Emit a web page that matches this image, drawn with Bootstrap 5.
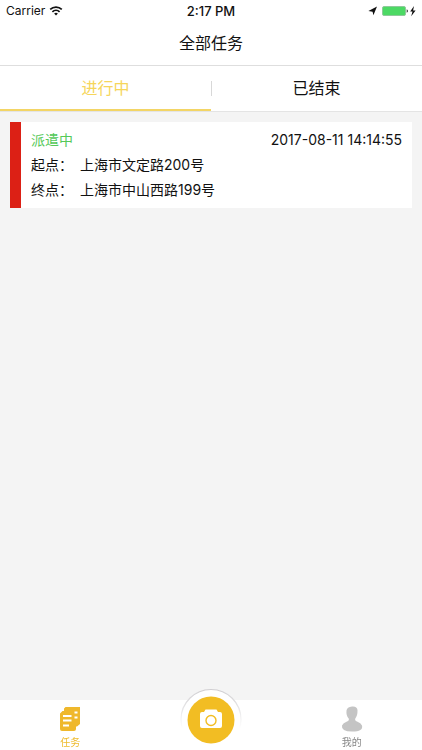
<!DOCTYPE html>
<html lang="zh-CN">
<head>
<meta charset="utf-8">
<meta name="viewport" content="width=device-width, initial-scale=1">
<title>全部任务</title>
<link href="https://cdn.jsdelivr.net/npm/bootstrap@5.3.0/dist/css/bootstrap.min.css" rel="stylesheet">
<style>
body { font-family: Inter, "Noto Sans CJK SC", sans-serif; font-size: 14px; background: #f4f4f4; color: #111; }
.status-bar { height: 22px; font-size: 12px; line-height: 22px; padding: 0 6px; }
.clock { font-size: 13px; font-weight: 500; }
.page-title { height: 44px; font-size: 16px; line-height: 42px; font-weight: 400; border-bottom: 1px solid #dedede; }
.task-tabs { border-bottom: 1px solid #e4e4e4; }
.task-tab { height: 45px; border: 0; border-bottom: 2px solid transparent; background: none; font-size: 16px; line-height: 24px; color: #111; padding: 0; }
.task-tab.active { color: #f6d65b; border-color: #f3d565; }
.tab-divider { width: 1px; height: 15px; margin: 0 -1px 0 0; background: #d8d8d8; }
.task-list { padding: 10px; }
.task-card { border: 0; border-left: 11px solid #dc2015; border-radius: 0; padding: 5px 10px 6px 10px; color: #111; line-height: 25px; }
.task-state { color: #55c959; }
.task-label { width: 49px; }
.bottom-bar { height: 50px; }
.bar-link { font-size: 10px; line-height: 14px; color: #888; }
.bar-link.active { color: #eebb2d; }
.camera-btn { width: 62px; height: 62px; margin-top: -12px; border: 0; background: none; }
</style>
<script src="https://cdn.jsdelivr.net/npm/bootstrap@5.3.0/dist/js/bootstrap.bundle.min.js"></script>
</head>
<body class="d-flex flex-column min-vh-100">
<header class="bg-white">
  <div class="status-bar row g-0">
    <div class="col d-flex align-items-center gap-1">
      <span>Carrier</span>
      <svg width="14" height="11" viewBox="0 0 14 11" fill="none" stroke="#111" stroke-width="1.7" aria-hidden="true"><path d="M1.2 3.4a8.4 8.4 0 0 1 11.6 0M3.4 5.800a5.200 5.200 0 0 1 7.200 0"/><path d="M7 9.600 5.100 7.600a2.800 2.800 0 0 1 3.800 0z" fill="#111" stroke="none"/></svg>
    </div>
    <div class="col-auto clock">2:17 PM</div>
    <div class="col d-flex align-items-center justify-content-end">
      <svg width="48" height="12" viewBox="0 0 48 12" aria-hidden="true"><path d="M9 1.500 5.400 10.300 4.600 6.700.400 6z" fill="#111"/><rect x="14.500" y="1.500" width="23" height="9" rx="1.500" fill="#4cd964" stroke="#8fc99a"/><path d="M38.700 4.300c1.700.400 1.700 3 0 3.400z" fill="#333"/><path d="M46 1 42.200 6.500h2.300l-1.300 4.700 4.400-5.800h-2.500z" fill="#111"/></svg>
    </div>
  </div>
  <h1 class="page-title text-center m-0">全部任务</h1>
  <div class="task-tabs d-flex align-items-center" role="tablist">
    <button type="button" class="task-tab active flex-fill w-50" role="tab" aria-selected="true">进行中</button>
    <span class="tab-divider flex-shrink-0"></span>
    <button type="button" class="task-tab flex-fill w-50" role="tab" aria-selected="false">已结束</button>
  </div>
</header>
<main class="task-list flex-grow-1">
  <article class="task-card card">
    <div class="d-flex justify-content-between"><span class="task-state">派遣中</span><time datetime="2017-08-11T14:14:55">2017-08-11 14:14:55</time></div>
    <div class="d-flex"><span class="task-label">起点：</span><span>上海市文定路200号</span></div>
    <div class="d-flex"><span class="task-label">终点：</span><span>上海市中山西路199号</span></div>
  </article>
</main>
<nav class="bottom-bar bg-white row g-0 sticky-bottom">
  <div class="col-4"><a href="#" class="bar-link active d-flex flex-column align-items-center text-decoration-none pt-1" aria-current="page">
    <svg width="24" height="31" viewBox="0 0 24 31" aria-hidden="true"><path d="M7.500 3H22v17l-3 2.500h-1V25q0 2-2 2H4q-2 0-2-2V9.500L4.500 7H6V4.500z" fill="#efb82c"/><path d="M5 12h8.500M5 16.500h8.500M5 21.500h6" stroke="#fff" stroke-width="2"/><path d="M16.500 8.500h3M16.500 13.500h3" stroke="#fff" stroke-width="2.200"/></svg>
    <span>任务</span></a></div>
  <div class="col-4 text-center">
    <button type="button" class="camera-btn p-0" aria-label="拍照">
      <svg class="d-block" width="62" height="62" viewBox="0 0 62 62" aria-hidden="true"><defs><linearGradient id="ring" x2="0" y2="1"><stop stop-color="#cfcdd0"/><stop offset=".65" stop-color="#fff"/></linearGradient></defs><circle cx="31" cy="31.500" r="30" fill="#fff" stroke="url(#ring)" stroke-width="1.200"/><circle cx="31" cy="32" r="23.500" fill="#f2bd23"/><path d="M22 24h2l1.500-2.500h11L38 24h2q2 0 2 2v12q0 2-2 2H22q-2 0-2-2V26q0-2 2-2z" fill="#fff"/><circle cx="31" cy="32.500" r="5" fill="none" stroke="#f2bd23" stroke-width="1.400"/></svg>
    </button>
  </div>
  <div class="col-4"><a href="#" class="bar-link d-flex flex-column align-items-center text-decoration-none pt-1">
    <svg width="24" height="31" viewBox="0 0 24 31" aria-hidden="true"><path d="M6.500 6.500Q7 3 12 2.500q5-.500 5.500 3.500.200 5.500-2.200 8.500-.800 2 1.700 3 4 1.500 5 4 1.500 6-9.800 6t-10.200-6q1-2.500 5-4 2.500-1 1.700-3Q6 12 6.500 6.500z" fill="#c4c4c4"/></svg>
    <span>我的</span></a></div>
</nav>
</body>
</html>
